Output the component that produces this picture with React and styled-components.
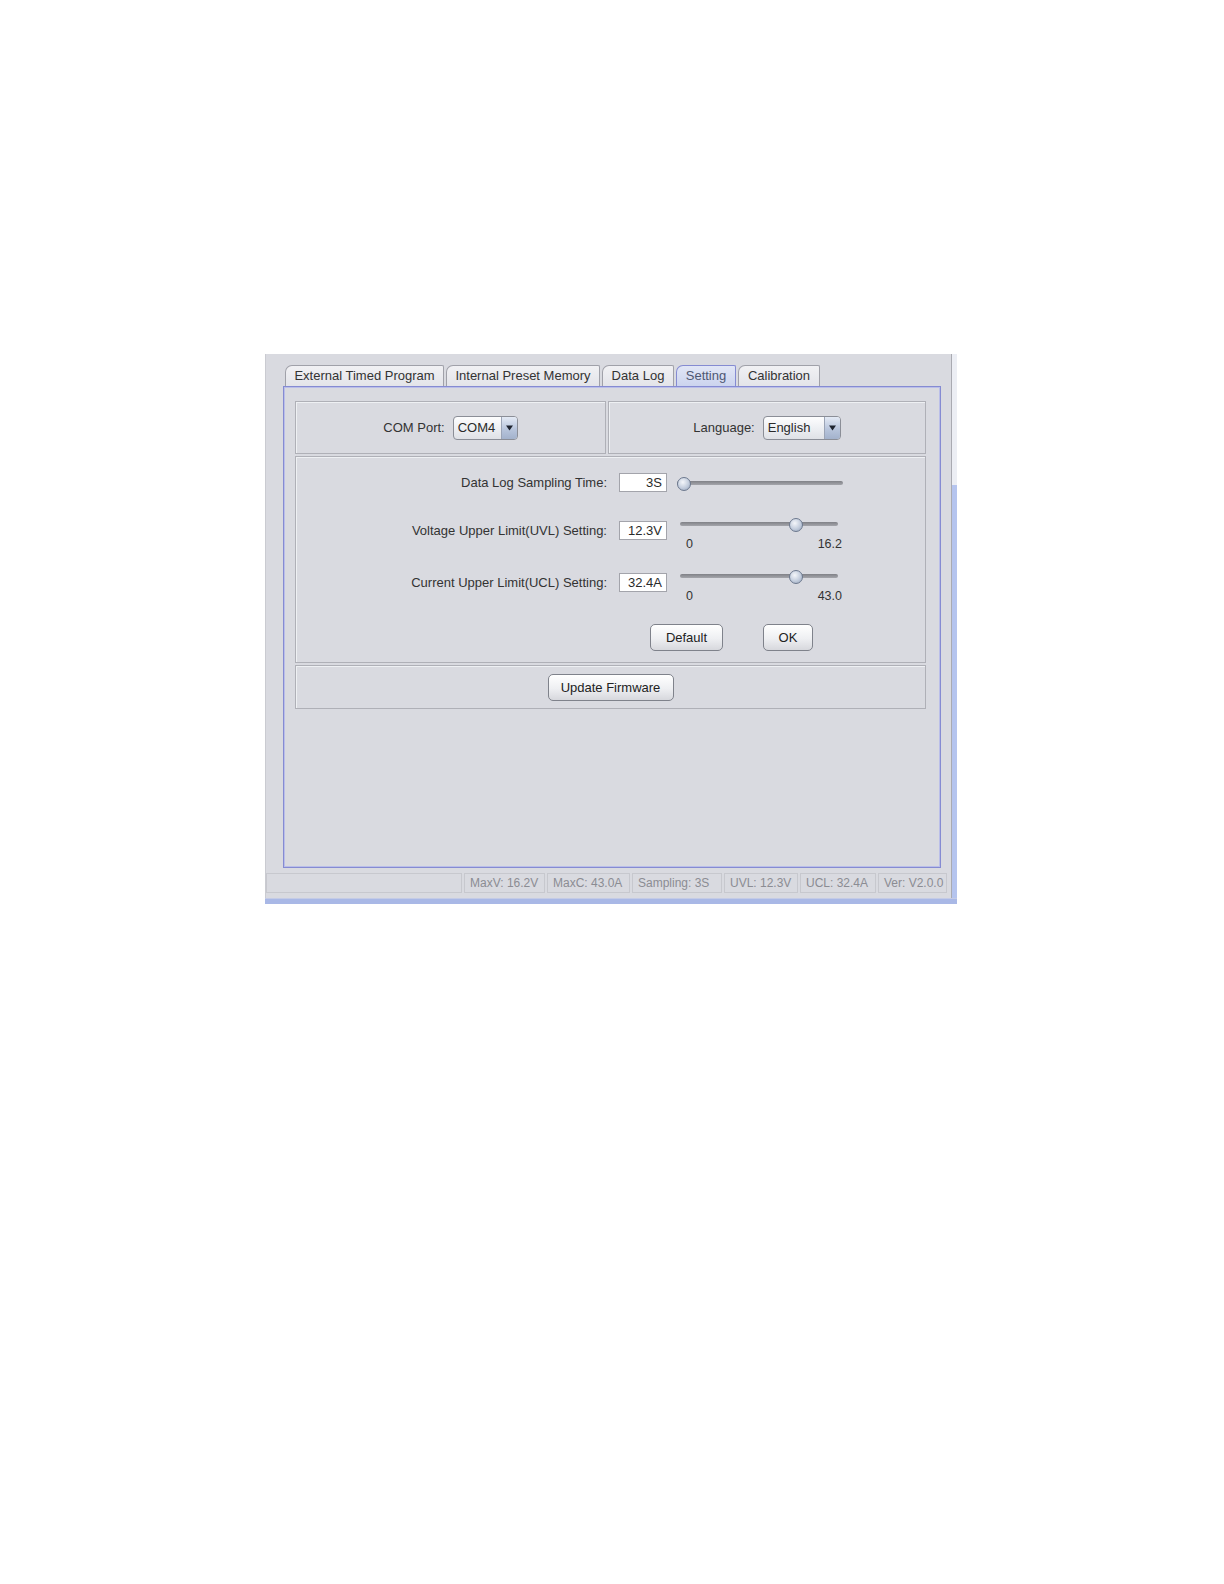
import React from 'react'
import styled, {createGlobalStyle} from 'styled-components'

const GlobalStyle = createGlobalStyle`
  html, body {
    margin: 0;
    background: #ffffff;
  }
  body {
    font-family: "Liberation Sans", Arial, sans-serif;
    color: #333333;
  }
`

const windowGray = '#d9dae0'
const frameBlue = '#858bd2'

const tabs = [
  {label: 'External Timed Program', width: 159},
  {label: 'Internal Preset Memory', width: 154},
  {label: 'Data Log', width: 72},
  {label: 'Setting', width: 60, active: true},
  {label: 'Calibration', width: 82}
]

const statusCells = [
  {text: 'MaxV: 16.2V', width: 81},
  {text: 'MaxC: 43.0A', width: 83},
  {text: 'Sampling: 3S', width: 90},
  {text: 'UVL: 12.3V', width: 74},
  {text: 'UCL: 32.4A', width: 76},
  {text: 'Ver: V2.0.0', width: 69}
]

const limits = [
  {label: 'Voltage Upper Limit(UVL) Setting:', value: '12.3V', ratio: 12.3 / 16.2, max: '16.2'},
  {label: 'Current Upper Limit(UCL) Setting:', value: '32.4A', ratio: 32.4 / 43.0, max: '43.0'}
]

export default function App() {
  return (
    <>
      <GlobalStyle />
      <Page>
        <Window>
          <WindowRow>
            <Frame>
              <TabStrip>
                {tabs.map(tab => (
                  <Tab key={tab.label} w={tab.width} active={tab.active}>
                    {tab.label}
                  </Tab>
                ))}
              </TabStrip>
              <TabPanel>
                <TopRow>
                  <GroupBox>
                    <FieldLabel>COM Port:</FieldLabel>
                    <ComboBox value="COM4" width={65} />
                  </GroupBox>
                  <GroupBox grow>
                    <FieldLabel>Language:</FieldLabel>
                    <ComboBox value="English" width={78} />
                  </GroupBox>
                </TopRow>

                <SettingsGroup>
                  <SettingRow>
                    <RowLabel>Data Log Sampling Time:</RowLabel>
                    <ValueField>3S</ValueField>
                    <Slider width={166} offset={10} top={7} ratio={0} />
                  </SettingRow>
                  {limits.map(limit => (
                    <SettingRow key={limit.label}>
                      <RowLabel>{limit.label}</RowLabel>
                      <ValueField>{limit.value}</ValueField>
                      <Slider
                        width={158}
                        offset={13}
                        top={0}
                        ratio={limit.ratio}
                        min="0"
                        max={limit.max}
                      />
                    </SettingRow>
                  ))}
                  <ButtonRow>
                    <Button w={73}>Default</Button>
                    <Button w={50}>OK</Button>
                  </ButtonRow>
                </SettingsGroup>

                <FirmwareGroup>
                  <Button w={126}>Update Firmware</Button>
                </FirmwareGroup>
              </TabPanel>

              <StatusBar>
                <StatusCell grow />
                {statusCells.map(cell => (
                  <StatusCell key={cell.text} w={cell.width}>
                    {cell.text}
                  </StatusCell>
                ))}
              </StatusBar>
            </Frame>
            <EdgeStrip />
          </WindowRow>
          <BottomBar />
        </Window>
      </Page>
    </>
  )
}

function ComboBox({value, width}) {
  return (
    <Combo w={width}>
      <ComboText>{value}</ComboText>
      <ComboArrow>
        <svg width="7" height="6" viewBox="0 0 7 6">
          <path d="M0 0.5 L7 0.5 L3.5 5.5 Z" fill="#1f2430" />
        </svg>
      </ComboArrow>
    </Combo>
  )
}

function Slider({width, offset, top, ratio, min, max}) {
  return (
    <SliderBox w={width} offset={offset} top={top}>
      <TrackArea>
        <Track />
        <Thumb style={{left: ratio * (width - 14)}} />
      </TrackArea>
      {max && (
        <Ticks>
          <span>{min}</span>
          <span>{max}</span>
        </Ticks>
      )}
    </SliderBox>
  )
}

const Page = styled.div`
  padding: 354px 0 400px 265px;
`

const Window = styled.div`
  width: 692px;
  display: flex;
  flex-direction: column;
  background: ${windowGray};
`

const WindowRow = styled.div`
  display: flex;
`

const Frame = styled.div`
  box-sizing: border-box;
  width: 687px;
  padding: 11px 0 5px 17px;
  border-right: 1px solid #a9aab1;
  border-left: 1px solid #cacbd1;
`

const EdgeStrip = styled.div`
  width: 5px;
  background: linear-gradient(to bottom, #eceef4 0, #eceef4 131px, #b5c4ee 131px);
`

const BottomBar = styled.div`
  height: 5px;
  background: #a9b8e6;
  border-top: 1px solid #c4cbe6;
`

const TabStrip = styled.div`
  display: flex;
  align-items: flex-end;
  height: 21px;
  padding-left: 2px;
`

const Tab = styled.div`
  box-sizing: border-box;
  width: ${p => p.w}px;
  height: 21px;
  margin-right: 2px;
  border: 1px solid ${p => (p.active ? frameBlue : '#a0a1a9')};
  border-bottom: none;
  border-radius: 7px 2px 0 0;
  background: ${p =>
    p.active
      ? 'linear-gradient(#e1e6f6, #ccd4ee)'
      : 'linear-gradient(#f1f1f4, #e3e4e9)'};
  color: ${p => (p.active ? '#4f5773' : '#333333')};
  font-size: 13px;
  line-height: 20px;
  text-align: center;
  white-space: nowrap;
`

const TabPanel = styled.div`
  box-sizing: border-box;
  width: 658px;
  height: 482px;
  border: 1px solid ${frameBlue};
  box-shadow: inset 0 0 0 1px #babee9;
  padding: 14px 14px 0 11px;
  display: flex;
  flex-direction: column;
  gap: 2px;
`

const etched = `
  box-sizing: border-box;
  border: 1px solid #afb0b7;
  box-shadow: inset 1px 1px 0 #eef0f3;
`

const TopRow = styled.div`
  display: flex;
  gap: 2px;
  height: 53px;
`

const GroupBox = styled.div`
  ${etched}
  flex: ${p => (p.grow ? '1 1 auto' : '0 0 311px')};
  display: flex;
  align-items: center;
  justify-content: center;
  gap: 8px;
`

const FieldLabel = styled.span`
  font-size: 13px;
  color: #333333;
`

const Combo = styled.div`
  box-sizing: border-box;
  width: ${p => p.w}px;
  height: 24px;
  display: flex;
  border: 1px solid #8b8e97;
  border-radius: 4px;
  overflow: hidden;
  background: linear-gradient(#fdfdfe, #eceef2 55%, #dfe1e6);
`

const ComboText = styled.span`
  flex: 1;
  padding-left: 4px;
  font-size: 13px;
  line-height: 22px;
  color: #2a2a2a;
`

const ComboArrow = styled.span`
  width: 15px;
  display: flex;
  align-items: center;
  justify-content: center;
  border-left: 1px solid #9ba4b6;
  background: linear-gradient(#e4eaf5, #b8c5dc 55%, #a3b2cc);
`

const SettingsGroup = styled.div`
  ${etched}
  height: 207px;
  padding-top: 16px;
  display: grid;
  grid-template-rows: 48px 52px 51px 27px;
`

const SettingRow = styled.div`
  display: flex;
  align-items: flex-start;
`

const RowLabel = styled.div`
  width: 311px;
  text-align: right;
  font-size: 13px;
  line-height: 19px;
  color: #333333;
  white-space: nowrap;
`

const ValueField = styled.div`
  box-sizing: border-box;
  width: 48px;
  height: 19px;
  margin-left: 12px;
  padding-right: 4px;
  border: 1px solid #a3a4ab;
  background: #ffffff;
  text-align: right;
  font-size: 13px;
  line-height: 17px;
  color: #2a2a2a;
`

const SliderBox = styled.div`
  width: ${p => p.w}px;
  margin-left: ${p => p.offset}px;
  margin-top: ${p => p.top}px;
`

const TrackArea = styled.div`
  position: relative;
  height: 5px;
`

const Track = styled.div`
  height: 4px;
  margin-top: 1px;
  border-radius: 2px;
  background: linear-gradient(#808187, #a4a5ab);
`

const Thumb = styled.div`
  position: absolute;
  top: -4px;
  box-sizing: border-box;
  width: 14px;
  height: 14px;
  border-radius: 50%;
  border: 1px solid #6c788e;
  background: radial-gradient(circle at 40% 35%, #f4f6fa 0, #c3cddd 55%, #94a2b9 100%);
`

const Ticks = styled.div`
  display: flex;
  justify-content: space-between;
  margin: 10px -4px 0 6px;
  font-size: 12.5px;
  line-height: 15px;
  color: #333333;
`

const ButtonRow = styled.div`
  display: flex;
  gap: 40px;
  padding-left: 354px;
`

const Button = styled.button`
  box-sizing: border-box;
  width: ${p => p.w}px;
  height: 27px;
  padding: 0;
  border: 1px solid #7f828b;
  border-radius: 5px;
  background: linear-gradient(#ffffff, #eeeff2 55%, #d7d8dd);
  font-family: "Liberation Sans", Arial, sans-serif;
  font-size: 13px;
  color: #222222;
`

const FirmwareGroup = styled.div`
  ${etched}
  height: 44px;
  display: flex;
  align-items: center;
  justify-content: center;
`

const StatusBar = styled.div`
  display: flex;
  gap: 2px;
  height: 20px;
  margin: 5px 4px 0 -17px;
`

const StatusCell = styled.div`
  box-sizing: border-box;
  flex: ${p => (p.grow ? '1 1 auto' : `0 0 ${p.w}px`)};
  padding-left: 5px;
  border: 1px solid #c7c8ce;
  font-size: 12px;
  line-height: 18px;
  color: #8b8c93;
  white-space: nowrap;
`
